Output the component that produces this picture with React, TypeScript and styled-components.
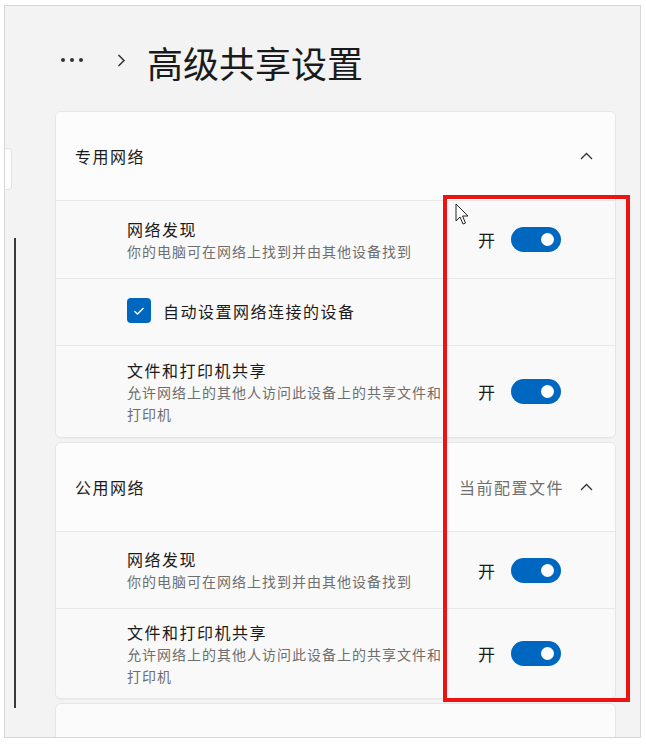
import React from 'react'
import styled, { createGlobalStyle } from 'styled-components'

const GlobalStyle = createGlobalStyle`
  html, body {
    margin: 0;
    padding: 0;
    background: #ffffff;
  }
  body {
    font-family: "Noto Sans CJK SC", "Noto Sans", sans-serif;
    color: #1b1b1b;
  }
`

const Frame = styled.div`
  position: relative;
  margin: 5px 0 0 4px;
  width: 637px;
  height: 733px;
  box-sizing: border-box;
  border: 1px solid #d6d6d6;
  background: #f3f3f3;
  display: flex;
  overflow: hidden;
`

const Sidebar = styled.div`
  width: 50px;
  flex-shrink: 0;
  display: flex;
  flex-direction: column;
  align-items: flex-start;
`

const NavTab = styled.div`
  margin-top: 142px;
  width: 6px;
  height: 40px;
  background: #fdfdfd;
  border: 1px solid #e2e2e2;
  border-left: none;
  border-radius: 0 4px 4px 0;
`

const ScrollLine = styled.div`
  margin: 48px 0 0 9px;
  width: 2px;
  height: 470px;
  background: #3a3a3a;
`

const Content = styled.div`
  width: 561px;
  display: flex;
  flex-direction: column;
`

const TitleRow = styled.div`
  margin-top: 32px;
  height: 48px;
  display: flex;
  align-items: center;
  padding-left: 5px;
  margin-bottom: 25px;
`

const Breadcrumb = styled.div`
  display: flex;
  align-items: center;
  gap: 31px;
  margin-right: 21px;
  padding-bottom: 4px;
`

const PageTitle = styled.h1`
  margin: 0;
  font-size: 36px;
  font-weight: 400;
  letter-spacing: 0;
  line-height: 48px;
  color: #1a1a1a;
`

const CardStack = styled.div`
  display: flex;
  flex-direction: column;
  gap: 4px;
`

const Card = styled.div<{ stub?: boolean }>`
  background: #fbfbfb;
  border: 1px solid #e6e6e6;
  border-radius: 6px;
  overflow: hidden;
  box-shadow: 0 1px 1px rgba(0, 0, 0, 0.03);
  height: ${p => (p.stub ? '60px' : 'auto')};
`

const CardHeader = styled.div`
  height: 88px;
  display: flex;
  align-items: center;
  justify-content: space-between;
  padding: 0 22px 0 19px;
  background: #fcfcfc;
`

const Label = styled.span`
  font-size: 16px;
  letter-spacing: 1.5px;
  line-height: 22px;
  color: #1b1b1b;
`

const HeaderRight = styled.div`
  display: flex;
  align-items: center;
  gap: 16px;
`

const Muted = styled.span`
  font-size: 16px;
  letter-spacing: 1.5px;
  color: #707070;
`

const Row = styled.div<{ h: number }>`
  height: ${p => p.h}px;
  box-sizing: border-box;
  border-top: 1px solid #e8e8e8;
  display: flex;
  align-items: center;
  justify-content: space-between;
  padding: 0 54px 0 71px;
  background: #f9f9f9;
`

const TextBlock = styled.div`
  display: flex;
  flex-direction: column;
  max-width: 320px;
`

const Sub = styled.span`
  font-size: 14px;
  letter-spacing: 1px;
  line-height: 22px;
  color: #6e6e6e;
`

const CheckLine = styled.label`
  display: flex;
  align-items: center;
  gap: 12px;
  padding-bottom: 3px;
`

const CheckBox = styled.span`
  width: 24px;
  height: 25px;
  border-radius: 4px;
  background: #0067c0;
  display: flex;
  align-items: center;
  justify-content: center;
`

const ToggleWrap = styled.div`
  display: flex;
  align-items: center;
  gap: 16px;
  font-size: 17px;
  color: #1b1b1b;
`

const Toggle = styled.span`
  width: 50px;
  height: 25px;
  border-radius: 13px;
  background: #0067c0;
  display: flex;
  align-items: center;
  justify-content: flex-end;
  padding-right: 7px;
  box-sizing: border-box;
`

const Knob = styled.span`
  width: 13px;
  height: 13px;
  border-radius: 50%;
  background: #ffffff;
`

const Highlight = styled.div`
  position: absolute;
  left: 438px;
  top: 189px;
  width: 187px;
  height: 507px;
  box-sizing: border-box;
  border: 4px solid #ee1313;
  pointer-events: none;
`

const Cursor = styled.svg`
  position: absolute;
  left: 450px;
  top: 197px;
`

const Chevron = () => (
  <svg width="13" height="8" viewBox="0 0 13 8">
    <path d="M1 7 L6.5 1.5 L12 7" fill="none" stroke="#333" strokeWidth="1.3" />
  </svg>
)

const OnToggle = () => (
  <ToggleWrap>
    <span>开</span>
    <Toggle>
      <Knob />
    </Toggle>
  </ToggleWrap>
)

type Setting = { title: string; sub: string; h: number }

const SettingRow = ({ title, sub, h }: Setting) => (
  <Row h={h}>
    <TextBlock>
      <Label>{title}</Label>
      <Sub>{sub}</Sub>
    </TextBlock>
    <OnToggle />
  </Row>
)

export default function App() {
  return (
    <>
      <GlobalStyle />
      <Frame>
        <Sidebar>
          <NavTab />
          <ScrollLine />
        </Sidebar>
        <Content>
          <TitleRow>
            <Breadcrumb>
              <svg width="26" height="6" viewBox="0 0 26 6">
                <circle cx="3" cy="3" r="2" fill="#333" />
                <circle cx="12" cy="3" r="2" fill="#333" />
                <circle cx="21" cy="3" r="2" fill="#333" />
              </svg>
              <svg width="9" height="13" viewBox="0 0 9 13">
                <path d="M1.5 1 L7 6.5 L1.5 12" fill="none" stroke="#333" strokeWidth="1.5" />
              </svg>
            </Breadcrumb>
            <PageTitle>高级共享设置</PageTitle>
          </TitleRow>

          <CardStack>
            <Card>
              <CardHeader>
                <Label>专用网络</Label>
                <Chevron />
              </CardHeader>
              <SettingRow h={78} title="网络发现" sub="你的电脑可在网络上找到并由其他设备找到" />
              <Row h={67}>
                <CheckLine>
                  <CheckBox>
                    <svg width="12" height="10" viewBox="0 0 12 10">
                      <path d="M1.5 5.2 L4.5 8 L10.5 2" fill="none" stroke="#fff" strokeWidth="1.4" />
                    </svg>
                  </CheckBox>
                  <Label>自动设置网络连接的设备</Label>
                </CheckLine>
              </Row>
              <SettingRow h={92} title="文件和打印机共享" sub="允许网络上的其他人访问此设备上的共享文件和打印机" />
            </Card>

            <Card>
              <CardHeader>
                <Label>公用网络</Label>
                <HeaderRight>
                  <Muted>当前配置文件</Muted>
                  <Chevron />
                </HeaderRight>
              </CardHeader>
              <SettingRow h={77} title="网络发现" sub="你的电脑可在网络上找到并由其他设备找到" />
              <SettingRow h={90} title="文件和打印机共享" sub="允许网络上的其他人访问此设备上的共享文件和打印机" />
            </Card>

            <Card stub />
          </CardStack>
        </Content>

        <Highlight />
        <Cursor width="14" height="22" viewBox="0 0 14 22">
          <path d="M1 1 L1 18 L5 14 L8 21 L10.5 20 L7.5 13 L13 13 Z" fill="#fff" stroke="#222" strokeWidth="1" strokeLinejoin="round" />
        </Cursor>
      </Frame>
    </>
  )
}
